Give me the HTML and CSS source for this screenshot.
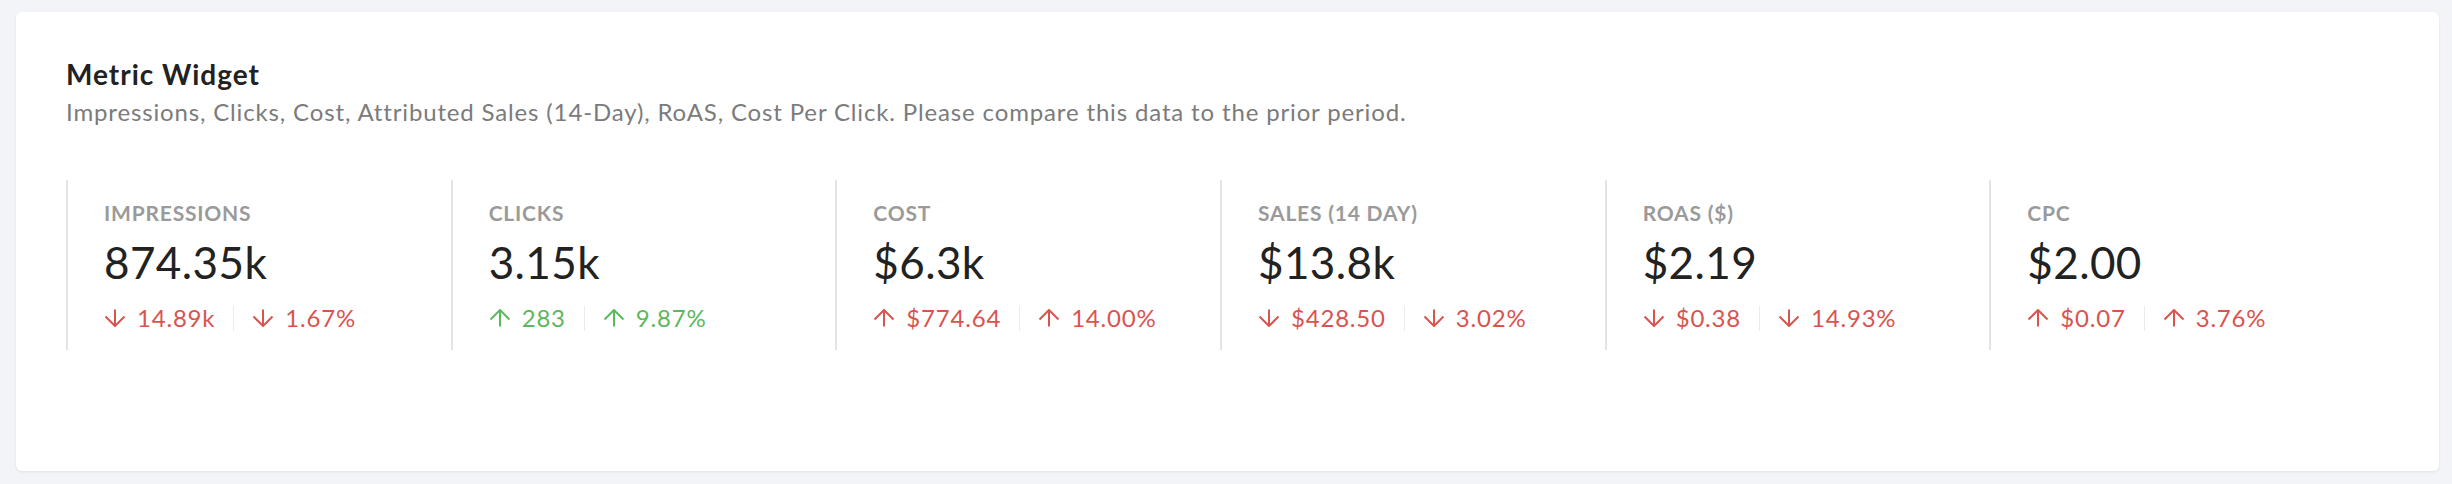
FILE: index.html
```html
<!DOCTYPE html>
<html>
<head>
    <title>Metric Widget</title>
    <link rel="stylesheet" href="styles.css">
</head>
<body>
    <div class="widget">
        <h2 class="widget-title">Metric Widget</h2>
        <p class="widget-desc">Impressions, Clicks, Cost, Attributed Sales (14-Day), RoAS, Cost Per Click. Please compare this data to the prior period.</p>

        <div class="metrics">
            <div class="metric">
                <div class="metric-label">Impressions</div>
                <div class="metric-value">874.35k</div>
                <div class="metric-change bad">
                    <span class="delta"><svg class="arrow" viewBox="0 0 22 18"><path d="M11 0.5V17M1.5 7.5L11 17L20.5 7.5"/></svg>14.89k</span>
                    <span class="sep"></span>
                    <span class="delta"><svg class="arrow" viewBox="0 0 22 18"><path d="M11 0.5V17M1.5 7.5L11 17L20.5 7.5"/></svg>1.67%</span>
                </div>
            </div>
            <div class="metric">
                <div class="metric-label">Clicks</div>
                <div class="metric-value">3.15k</div>
                <div class="metric-change good">
                    <span class="delta"><svg class="arrow" viewBox="0 0 22 18"><path d="M11 17.5V1M1.5 10.5L11 1L20.5 10.5"/></svg>283</span>
                    <span class="sep"></span>
                    <span class="delta"><svg class="arrow" viewBox="0 0 22 18"><path d="M11 17.5V1M1.5 10.5L11 1L20.5 10.5"/></svg>9.87%</span>
                </div>
            </div>
            <div class="metric">
                <div class="metric-label">Cost</div>
                <div class="metric-value">$6.3k</div>
                <div class="metric-change bad">
                    <span class="delta"><svg class="arrow" viewBox="0 0 22 18"><path d="M11 17.5V1M1.5 10.5L11 1L20.5 10.5"/></svg>$774.64</span>
                    <span class="sep"></span>
                    <span class="delta"><svg class="arrow" viewBox="0 0 22 18"><path d="M11 17.5V1M1.5 10.5L11 1L20.5 10.5"/></svg>14.00%</span>
                </div>
            </div>
            <div class="metric">
                <div class="metric-label">Sales (14 Day)</div>
                <div class="metric-value">$13.8k</div>
                <div class="metric-change bad">
                    <span class="delta"><svg class="arrow" viewBox="0 0 22 18"><path d="M11 0.5V17M1.5 7.5L11 17L20.5 7.5"/></svg>$428.50</span>
                    <span class="sep"></span>
                    <span class="delta"><svg class="arrow" viewBox="0 0 22 18"><path d="M11 0.5V17M1.5 7.5L11 17L20.5 7.5"/></svg>3.02%</span>
                </div>
            </div>
            <div class="metric">
                <div class="metric-label">RoAS ($)</div>
                <div class="metric-value">$2.19</div>
                <div class="metric-change bad">
                    <span class="delta"><svg class="arrow" viewBox="0 0 22 18"><path d="M11 0.5V17M1.5 7.5L11 17L20.5 7.5"/></svg>$0.38</span>
                    <span class="sep"></span>
                    <span class="delta"><svg class="arrow" viewBox="0 0 22 18"><path d="M11 0.5V17M1.5 7.5L11 17L20.5 7.5"/></svg>14.93%</span>
                </div>
            </div>
            <div class="metric">
                <div class="metric-label">CPC</div>
                <div class="metric-value">$2.00</div>
                <div class="metric-change bad">
                    <span class="delta"><svg class="arrow" viewBox="0 0 22 18"><path d="M11 17.5V1M1.5 10.5L11 1L20.5 10.5"/></svg>$0.07</span>
                    <span class="sep"></span>
                    <span class="delta"><svg class="arrow" viewBox="0 0 22 18"><path d="M11 17.5V1M1.5 10.5L11 1L20.5 10.5"/></svg>3.76%</span>
                </div>
            </div>
        </div>
    </div>
</body>
</html>
```

FILE: styles.css
```css
/* Page */
body {
    margin: 0;
    padding: 12px 13px 13px 16px;
    background-color: #f3f4f7;
    font-family: "Lato", "Liberation Sans", sans-serif;
}

/* Card that holds the widget */
.widget {
    height: 459px;
    box-sizing: border-box;
    padding: 46px 65px 0 50px;
    background-color: #fff;
    border-radius: 6px;
    box-shadow: 0 1px 3px rgba(0, 0, 0, 0.08);
}

.widget-title {
    margin: 0;
    font-size: 28px;
    line-height: 32px;
    font-weight: 700;
    letter-spacing: 1px;
    color: #222;
}

.widget-desc {
    margin: 8px 0 0;
    font-size: 24px;
    line-height: 28px;
    letter-spacing: 0.85px;
    color: #7b7b7b;
}

/* Row of metric columns */
.metrics {
    display: grid;
    grid-template-columns: repeat(6, 1fr);
    margin-top: 54px;
}

.metric {
    height: 170px;
    box-sizing: border-box;
    padding: 20px 0 0 36px;
    border-left: 2px solid #e3e4e9;
}

.metric-label {
    font-size: 21px;
    line-height: 25px;
    font-weight: 700;
    letter-spacing: 0.8px;
    text-transform: uppercase;
    color: #9a9a9a;
}

.metric-value {
    margin-top: 11px;
    font-size: 44px;
    line-height: 52px;
    letter-spacing: 0.4px;
    color: #222;
}

/* Change against prior period */
.metric-change {
    display: flex;
    align-items: center;
    margin-top: 16px;
    font-size: 24px;
    line-height: 28px;
    letter-spacing: 0.8px;
}

.metric-change.bad {
    color: #d9534f;
}

.metric-change.good {
    color: #5cb85c;
}

.delta {
    display: flex;
    align-items: center;
}

.arrow {
    width: 22px;
    height: 18px;
    margin-right: 11px;
    fill: none;
    stroke: currentColor;
    stroke-width: 2;
}

.sep {
    width: 1px;
    height: 25px;
    margin: 0 18px;
    background-color: #ebebeb;
}
```
